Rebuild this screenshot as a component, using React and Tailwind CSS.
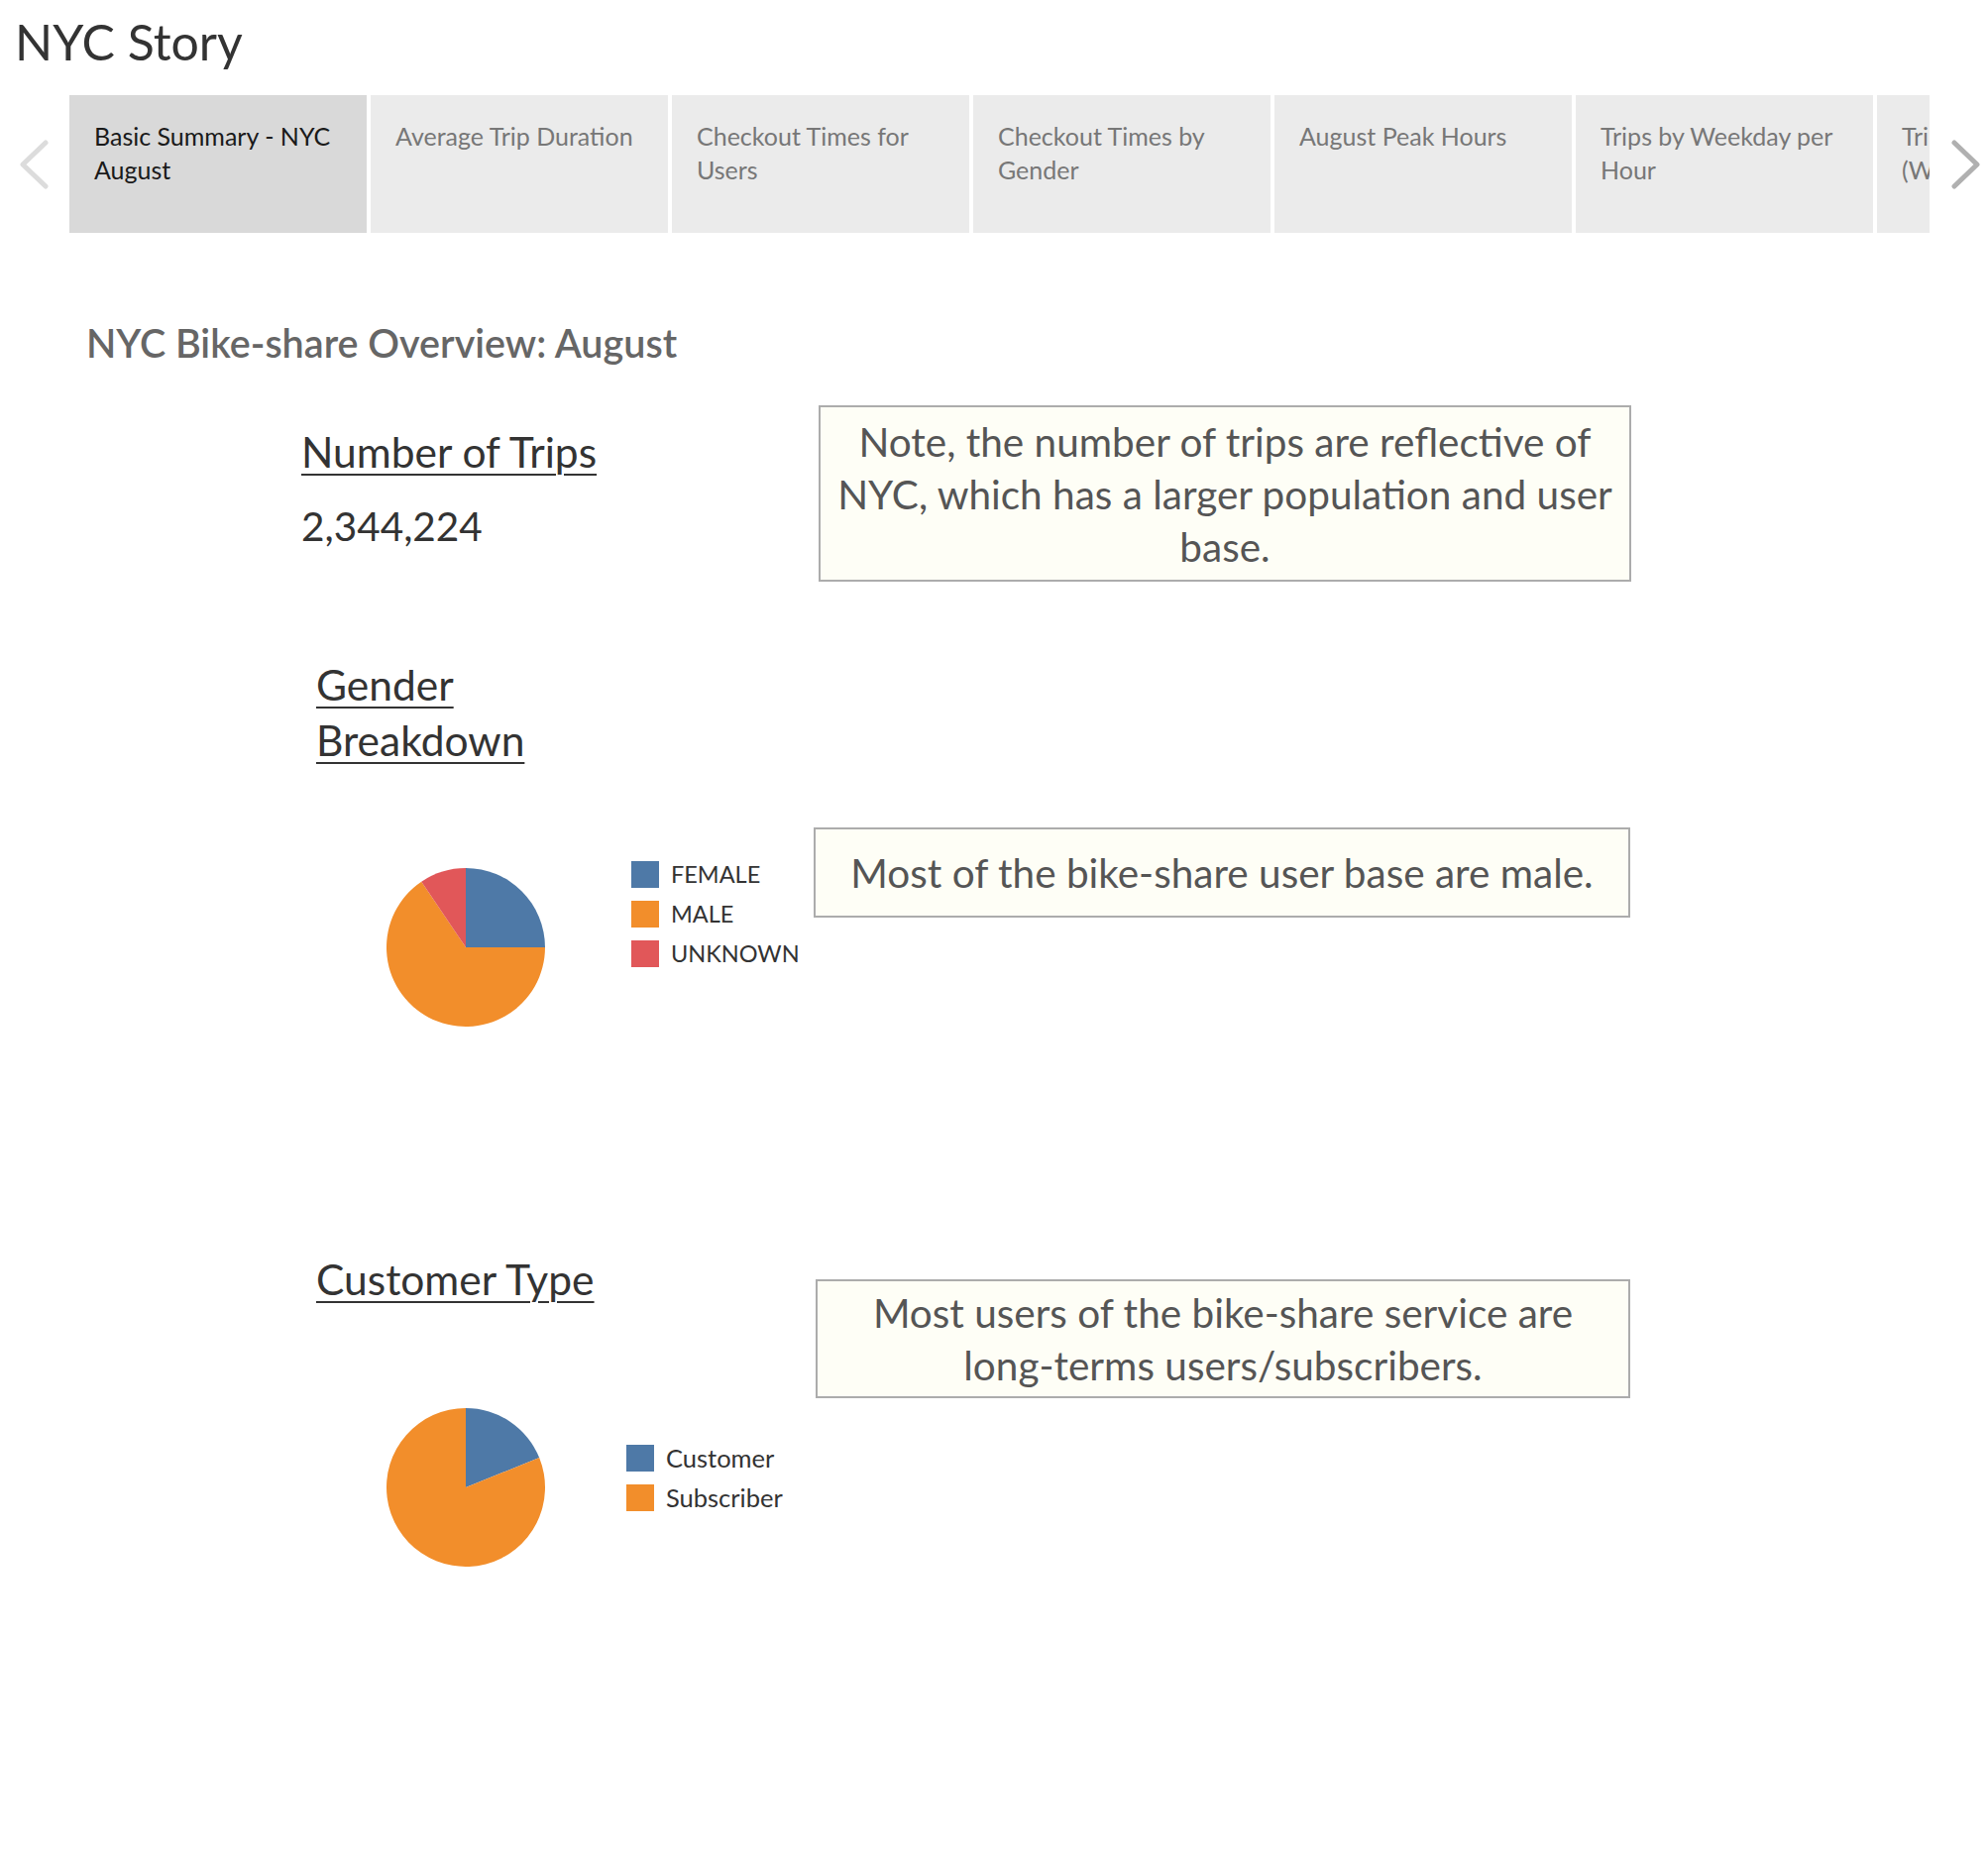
import React from 'react';

const tabs = [
  'Basic Summary - NYC August',
  'Average Trip Duration',
  'Checkout Times for Users',
  'Checkout Times by Gender',
  'August Peak Hours',
  'Trips by Weekday per Hour',
  'Trip Duration by Age (Weekday)',
];

// pie slice path, angles in degrees clockwise from 12 o'clock
const slice = (cx, cy, r, a0, a1) => {
  const p = (a) => [cx + r * Math.sin((a * Math.PI) / 180), cy - r * Math.cos((a * Math.PI) / 180)];
  const [x0, y0] = p(a0);
  const [x1, y1] = p(a1);
  const large = a1 - a0 > 180 ? 1 : 0;
  return `M${cx} ${cy} L${x0} ${y0} A${r} ${r} 0 ${large} 1 ${x1} ${y1} Z`;
};

const Pie = ({ parts }) => {
  let a = 0;
  return (
    <svg width="160" height="160" viewBox="0 0 160 160">
      {parts.map((p) => {
        const d = slice(80, 80, 80, a, a + p.deg);
        a += p.deg;
        return <path key={p.color} d={d} fill={p.color} />;
      })}
    </svg>
  );
};

const Legend = ({ items, textSize }) => (
  <div className="flex flex-col gap-[13px]">
    {items.map((it) => (
      <div key={it.label} className="flex items-center h-[27px]">
        <div className="w-[28px] h-[27px]" style={{ background: it.color }} />
        <span className={`ml-[12px] leading-[27px] text-[#333] ${textSize}`}>{it.label}</span>
      </div>
    ))}
  </div>
);

const NoteBox = ({ className, children }) => (
  <div
    className={`border-2 border-[#acacac] bg-[#fefef6] flex items-center justify-center text-center text-[40.5px] leading-[53px] text-[#555] ${className}`}
  >
    <p>{children}</p>
  </div>
);

const Chevron = ({ dir, color }) => (
  <svg width="32" height="50" viewBox="0 0 32 50" fill="none">
    <path
      d={dir === 'left' ? 'M28 3 L5 25 L28 47' : 'M4 3 L27 25 L4 47'}
      stroke={color}
      strokeWidth="5"
      strokeLinecap="round"
      strokeLinejoin="round"
    />
  </svg>
);

const BLUE = '#4e79a7';
const ORANGE = '#f28e2b';
const RED = '#e15759';

export default function App() {
  return (
    <div className="w-[2006px] h-[1874px] bg-white overflow-hidden font-['Lato','Liberation_Sans',sans-serif]">
      <h1 className="pl-[15px] pt-[12px] text-[50px] leading-[60px] text-[#333]">NYC Story</h1>

      {/* story point tabs */}
      <div className="mt-[24px] flex h-[139px]">
        <div className="w-[70px] flex items-center pl-[18px]">
          <Chevron dir="left" color="#dcdcdc" />
        </div>
        <div className="w-[1877px] overflow-hidden flex gap-[4px]">
          {tabs.map((t, i) => (
            <div
              key={t}
              className={`w-[300px] shrink-0 px-[25px] pt-[24px] text-[25px] leading-[34px] ${
                i === 0 ? 'bg-[#d9d9d9] text-[#1a1a1a]' : 'bg-[#ebebeb] text-[#777]'
              }`}
            >
              {t}
            </div>
          ))}
        </div>
        <div className="flex-1 flex items-center pl-[21px]">
          <Chevron dir="right" color="#b0b0b0" />
        </div>
      </div>

      <h2 className="mt-[89px] pl-[87px] text-[39.5px] leading-[44px] font-semibold text-[#666]">
        NYC Bike-share Overview: August
      </h2>

      {/* number of trips */}
      <div className="mt-[41px] flex items-start">
        <div className="w-[826px] pl-[304px] pt-[23px] text-[#333]">
          <div className="text-[42.5px] leading-[48px] underline decoration-2 underline-offset-[6px]">Number of Trips</div>
          <div className="mt-[27px] text-[40.5px] leading-[48px]">2,344,224</div>
        </div>
        <NoteBox className="w-[820px] h-[178px]">
          Note, the number of trips are reflective of
          <br />
          NYC, which has a larger population and user
          <br />
          base.
        </NoteBox>
      </div>

      {/* gender */}
      <div className="mt-[76px] pl-[319px] w-[560px] text-[42.5px] leading-[56px] text-[#333] underline decoration-2 underline-offset-[6px]">
        Gender
        <br />
        Breakdown
      </div>
      <div className="flex items-start">
        <div className="w-[821px] flex items-start">
          <div className="ml-[390px] mt-[101px]">
            <Pie parts={[{ deg: 90, color: BLUE }, { deg: 236, color: ORANGE }, { deg: 34, color: RED }]} />
          </div>
          <div className="ml-[87px] mt-[94px]">
            <Legend
              textSize="text-[23.5px]"
              items={[{ label: 'FEMALE', color: BLUE }, { label: 'MALE', color: ORANGE }, { label: 'UNKNOWN', color: RED }]}
            />
          </div>
        </div>
        <NoteBox className="mt-[60px] w-[824px] h-[91px]">Most of the bike-share user base are male.</NoteBox>
      </div>

      {/* customer type */}
      <div className="mt-[227px] flex items-start">
        <div className="w-[823px]">
          <div className="pl-[319px] text-[42.5px] leading-[56px] text-[#333]">
            <span className="underline decoration-2 underline-offset-[6px]">Customer Type</span>
          </div>
          <div className="flex items-start">
            <div className="ml-[390px] mt-[102px]">
              <Pie parts={[{ deg: 68, color: BLUE }, { deg: 292, color: ORANGE }]} />
            </div>
            <div className="ml-[82px] mt-[139px]">
              <Legend
                textSize="text-[25.5px]"
                items={[{ label: 'Customer', color: BLUE }, { label: 'Subscriber', color: ORANGE }]}
              />
            </div>
          </div>
        </div>
        <NoteBox className="mt-[28px] w-[822px] h-[120px]">
          Most users of the bike-share service are
          <br />
          long-terms users/subscribers.
        </NoteBox>
      </div>
    </div>
  );
}
